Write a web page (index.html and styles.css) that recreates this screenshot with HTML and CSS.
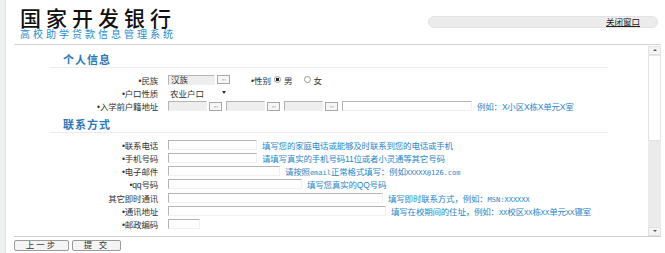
FILE: index.html
```html
<!DOCTYPE html>
<html lang="zh-CN">
<head>
  <meta charset="UTF-8">
  <title>高校助学贷款信息管理系统</title>
  <link rel="stylesheet" href="styles.css">
</head>
<body>
  <div class="header">
    <div class="brand">
      <div class="brand-name">国家开发银行</div>
      <div class="brand-sub">高校助学贷款信息管理系统</div>
    </div>
    <div class="toolbar"><a class="close-link">关闭窗口</a></div>
  </div>

  <div class="scroll">
    <div class="content">
      <div class="section-title">个人信息</div>
      <div class="rows">
        <div class="row">
          <div class="label">•民族</div>
          <div class="field">
            <span class="input gray w47">汉族</span><span class="dots">···</span>
            <span class="label-inline">•性别</span>
            <span class="radio on"></span><span class="opt">男</span>
            <span class="radio"></span><span class="opt">女</span>
          </div>
        </div>
        <div class="row">
          <div class="label">•户口性质</div>
          <div class="field">
            <span class="select">农业户口<span class="caret"></span></span>
          </div>
        </div>
        <div class="row">
          <div class="label">•入学前户籍地址</div>
          <div class="field">
            <span class="input gray w39"></span><span class="dots">···</span>
            <span class="input gray w39 grp"></span><span class="dots">···</span>
            <span class="input gray w39 grp"></span><span class="dots">···</span>
            <span class="input w130 grp"></span>
            <span class="hint">例如：X小区X栋X单元X室</span>
          </div>
        </div>
      </div>

      <div class="section-title">联系方式</div>
      <div class="rows">
        <div class="row">
          <div class="label">•联系电话</div>
          <div class="field"><span class="input w88"></span><span class="hint">填写您的家庭电话或能够及时联系到您的电话或手机</span></div>
        </div>
        <div class="row">
          <div class="label">•手机号码</div>
          <div class="field"><span class="input w88"></span><span class="hint">请填写真实的手机号码11位或者小灵通等其它号码</span></div>
        </div>
        <div class="row">
          <div class="label">•电子邮件</div>
          <div class="field"><span class="input w112"></span><span class="hint">请按照<span class="latin">email</span>正常格式填写：例如<span class="latin">XXXXX@126.com</span></span></div>
        </div>
        <div class="row">
          <div class="label">•qq号码</div>
          <div class="field"><span class="input w134"></span><span class="hint">填写您真实的QQ号码</span></div>
        </div>
        <div class="row">
          <div class="label">其它即时通讯</div>
          <div class="field"><span class="input w215"></span><span class="hint">填写即时联系方式，例如：<span class="latin">MSN:XXXXXX</span></span></div>
        </div>
        <div class="row">
          <div class="label">•通讯地址</div>
          <div class="field"><span class="input w218"></span><span class="hint">填写在校期间的住址，例如：<span class="latin">XX</span>校区<span class="latin">XX</span>栋<span class="latin">XX</span>单元<span class="latin">XX</span>寝室</span></div>
        </div>
        <div class="row">
          <div class="label">•邮政编码</div>
          <div class="field"><span class="input w32"></span></div>
        </div>
      </div>
    </div>
    <div class="scrollbar">
      <div class="arrow up"></div>
      <div class="thumb"></div>
      <div class="track"></div>
      <div class="arrow down"></div>
    </div>
  </div>

  <div class="actions">
    <button class="btn w55">上一步</button>
    <button class="btn w49">提 交</button>
  </div>
</body>
</html>
```

FILE: styles.css
```css
html, body {
  margin: 0;
  padding: 0;
  height: 100%;
  overflow: hidden;
}
body {
  padding-left: 5px;
  background: linear-gradient(to right, #eef1f1 5px, #dde2e2 5px, #dde2e2 6px, #fff 6px);
  font-family: "Liberation Sans", "Noto Sans CJK SC", sans-serif;
  color: #333;
  font-size: 8.5px;
}

.header {
  display: flex;
  justify-content: space-between;
  margin: 0 4px 0 9px;
  height: 44px;
  border-bottom: 1px solid #d2d2d2;
}
.brand { padding: 7px 0 0 6px; }
.brand-name {
  font-family: "Noto Sans CJK SC", sans-serif;
  font-size: 21px;
  line-height: 20px;
  letter-spacing: 5px;
  color: #111;
  font-weight: 500;
}
.brand-sub {
  font-family: "Noto Sans CJK SC", sans-serif;
  font-size: 10px;
  line-height: 11px;
  letter-spacing: 3px;
  color: #2a8bd0;
  margin-top: 1px;
}
.toolbar {
  margin-top: 16px;
  margin-right: 3px;
  width: 230px;
  height: 12px;
  border-radius: 6px;
  background: #ececec;
  border: 1px solid #e2e2e2;
  box-sizing: border-box;
  text-align: right;
  padding-right: 17px;
}
.close-link {
  font-size: 8.5px;
  line-height: 10px;
  color: #222;
  text-decoration: underline;
}

.scroll {
  display: flex;
  margin: 0 4px 0 9px;
  height: 191px;
  border-bottom: 1px solid #cfcfcf;
}
.content {
  flex: 1;
  padding-top: 3px;
}
.section-title {
  margin: 1px 0 0 36px;
  width: 545px;
  padding: 3px 0 0 13px;
  line-height: 15px;
  border-bottom: 1px solid #ececec;
  font-family: "Noto Sans CJK SC", sans-serif;
  font-size: 11px;
  font-weight: bold;
  letter-spacing: 1px;
  color: #2b78b8;
}
.rows { padding-top: 5px; }
.row {
  display: flex;
  align-items: center;
  height: 13.3px;
}
.label {
  width: 108px;
  margin-left: 36px;
  padding-right: 2px;
  text-align: right;
  letter-spacing: -0.2px;
}
.field {
  display: flex;
  align-items: center;
  margin-left: 8px;
}
.input {
  height: 10px;
  box-sizing: border-box;
  border-top: 1px solid #b4b4b4;
  border-left: 1px solid #b4b4b4;
  border-right: 1px solid #f0f0f0;
  border-bottom: 1px solid #f0f0f0;
  line-height: 8px;
  padding-left: 2px;
}
.input.gray { background: #eeeeee; }
.grp { margin-left: 4px; }
.w32 { width: 32px; }
.w39 { width: 39px; }
.w47 { width: 47px; }
.w88 { width: 89px; }
.w112 { width: 112px; }
.w130 { width: 130px; }
.w134 { width: 134px; }
.w215 { width: 215px; }
.w218 { width: 218px; }
.dots {
  display: flex;
  align-items: center;
  justify-content: center;
  width: 13px;
  height: 9px;
  margin-left: 2px;
  box-sizing: border-box;
  border: 1px solid #a8a8a8;
  background: #f6f6f6;
  font-family: "DejaVu Sans", sans-serif;
  font-size: 6px;
  line-height: 7px;
  letter-spacing: -0.5px;
  color: #333;
  overflow: hidden;
}
.label-inline { margin-left: 21px; margin-right: 3px; }
.radio {
  width: 5px;
  height: 5px;
  border: 1px solid #999;
  border-radius: 50%;
  background: #fff;
  margin-right: 3px;
  margin-left: 9px;
}
.label-inline + .radio { margin-left: 0; }
.radio.on { background: radial-gradient(circle, #222 1.5px, #fff 2px); }
.opt { margin-right: 2px; }
.select {
  width: 62px;
  display: flex;
  align-items: center;
  justify-content: space-between;
  padding-left: 2px;
  box-sizing: border-box;
}
.caret {
  margin-right: 4px;
  border-left: 2px solid transparent;
  border-right: 2px solid transparent;
  border-top: 3px solid #333;
}
.hint {
  margin-left: 5px;
  color: #2a86c8;
  letter-spacing: -0.2px;
  white-space: nowrap;
}
.latin {
  font-family: "DejaVu Sans Mono", monospace;
  font-size: 7px;
  letter-spacing: 0;
}

.scrollbar {
  width: 13px;
  display: flex;
  flex-direction: column;
}
.arrow {
  height: 7px;
  background: #f4f4f4;
  border: 1px solid #e2e2e2;
  position: relative;
}
.arrow::after {
  content: "";
  position: absolute;
  left: 4px;
  top: 2px;
  border-left: 2px solid transparent;
  border-right: 2px solid transparent;
}
.arrow.up { margin-top: 1px; }
.arrow.up::after { border-bottom: 2px solid #555; }
.arrow.down::after { border-top: 2px solid #555; }
.thumb {
  height: 84px;
  background: #fff;
  border: 1px solid #e4e4e4;
}
.track {
  flex: 1;
  background: #ebebeb;
}

.actions {
  display: flex;
  gap: 3px;
  margin: 3px 0 0 9px;
}
.btn {
  height: 11px;
  padding: 0;
  font-family: "Liberation Sans", "Noto Sans CJK SC", sans-serif;
  font-size: 8.5px;
  line-height: 9px;
  letter-spacing: 2px;
  background: #f4f4f4;
  color: #333;
  border: 1px solid #9a9a9a;
  border-radius: 2px;
}
.w55 { width: 55px; }
.w49 { width: 49px; }
```
